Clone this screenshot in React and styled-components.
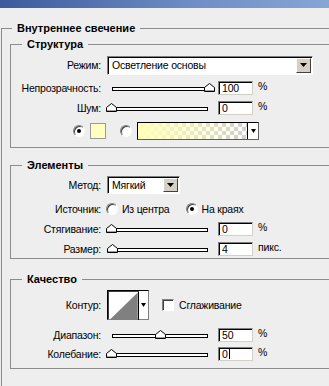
import React from 'react';
import styled, { createGlobalStyle } from 'styled-components';

const GlobalStyle = createGlobalStyle`
  html, body {
    margin: 0;
    padding: 0;
    height: 100%;
    overflow: hidden;
    background: #eeeeee;
  }
  body {
    font-family: "Liberation Sans", Arial, sans-serif;
    font-size: 10.5px;
    letter-spacing: -0.2px;
    color: #000;
  }
  #root { height: 100%; }
`;

const TitleBar = styled.div`
  height: 8px;
  background: linear-gradient(to right, #3b5a9c, #6f8fc6 60%, #86a6d6);
`;

const Outer = styled.fieldset`
  box-sizing: border-box;
  height: 364px;
  margin: 14px 0 0 1px;
  padding: 4px 0 0 8px;
  border: 1px solid #8c8c8c;
  border-right: none;
  border-bottom: none;
  min-width: 0;
`;

const Group = styled.fieldset`
  margin: ${p => p.$mt || 0}px 0 0 0;
  padding: 5px 0 ${p => p.$pb}px 0;
  border: 1px solid #8c8c8c;
  border-right: none;
  min-width: 0;
`;

const Legend = styled.legend`
  margin-left: ${p => p.$ml}px;
  padding: 0 5px;
  font-weight: bold;
  font-size: 11px;
  letter-spacing: 0;
  line-height: 12px;
`;

const Row = styled.div`
  display: flex;
  align-items: center;
  height: ${p => p.$h}px;
  margin-top: ${p => p.$mt || 0}px;
  padding-left: ${p => p.$pl || 0}px;
`;

const Label = styled.div`
  width: 92px;
  padding-right: 2px;
  margin-right: 4px;
  box-sizing: border-box;
  text-align: right;
  white-space: nowrap;
  flex-shrink: 0;
`;

const Select = styled.div`
  width: ${p => p.$w}px;
  height: ${p => p.$h}px;
  box-sizing: border-box;
  display: flex;
  align-items: center;
  justify-content: space-between;
  background: #fff;
  border: 1px solid;
  border-color: #808080 #ffffff #ffffff #808080;
  box-shadow: inset 1px 1px 0 #000;
  padding: 1px 1px 1px 4px;
  flex-shrink: 0;
`;

const DropButton = styled.div`
  width: 15px;
  height: 100%;
  box-sizing: border-box;
  background: #d4d0c8;
  border: 1px solid;
  border-color: #ffffff #404040 #404040 #ffffff;
  display: flex;
  align-items: center;
  justify-content: center;
`;

const Arrow = ({ w = 7 }) => (
  <svg width={w} height="4" viewBox={`0 0 ${w} 4`}>
    <polygon points={`0,0 ${w},0 ${w / 2},4`} fill="#000" />
  </svg>
);

const SliderBox = styled.div`
  position: relative;
  width: 106px;
  height: 14px;
  flex-shrink: 0;
`;

const Track = styled.div`
  position: absolute;
  left: 5px;
  right: 5px;
  top: 6px;
  height: 4px;
  box-sizing: border-box;
  border: 1px solid #000;
  background: #fff;
`;

const Thumb = styled.svg`
  position: absolute;
  top: 2px;
  width: 11px;
  height: 9px;
`;

const Slider = ({ value, max = 100 }) => (
  <SliderBox>
    <Track />
    <Thumb viewBox="0 0 11 9" style={{ left: 4 + (98 * value) / max - 5.5 }}>
      <polygon points="0.5,8.5 0.5,4.5 5.5,0.5 10.5,4.5 10.5,8.5" fill="#fff" stroke="#000" />
      <line x1="1" y1="7.5" x2="10" y2="7.5" stroke="#a0a0a0" />
    </Thumb>
  </SliderBox>
);

const Field = styled.div`
  width: 35px;
  height: 14px;
  margin-left: 5px;
  box-sizing: border-box;
  background: #fff;
  border: 1px solid;
  border-color: #808080 #d4d0c8 #d4d0c8 #808080;
  box-shadow: inset 1px 1px 0 #000;
  padding-left: 3px;
  display: flex;
  align-items: center;
  line-height: 12px;
  flex-shrink: 0;
`;

const Caret = styled.span`
  width: 1px;
  height: 10px;
  margin-left: 1px;
  background: #000;
`;

const Unit = styled.span`
  margin-left: 5px;
  align-self: flex-start;
  line-height: 11px;
  white-space: nowrap;
`;

const Radio = styled.span`
  width: 12px;
  height: 12px;
  box-sizing: border-box;
  border-radius: 50%;
  background: #fff;
  border: 1px solid;
  border-color: #808080 #ffffff #ffffff #808080;
  box-shadow: inset 1px 1px 0 #404040;
  display: inline-flex;
  align-items: center;
  justify-content: center;
  flex-shrink: 0;
  margin-left: ${p => p.$ml || 0}px;
  &::after {
    content: '';
    display: ${p => (p.$on ? 'block' : 'none')};
    width: 4px;
    height: 4px;
    border-radius: 50%;
    background: #000;
  }
`;

const OptionText = styled.span`
  margin-left: 4px;
  margin-right: ${p => p.$mr || 0}px;
  white-space: nowrap;
`;

const Swatch = styled.div`
  width: 16px;
  height: 16px;
  box-sizing: border-box;
  margin-left: 5px;
  margin-right: 14px;
  background: #ffffbf;
  border: 1px solid #9a9a9a;
`;

const GradientPicker = styled.div`
  width: 122px;
  height: 18px;
  margin-left: 5px;
  box-sizing: border-box;
  display: flex;
  border: 1px solid #000;
  border-right-color: #606060;
  border-bottom-color: #606060;
`;

const GradientFill = styled.div`
  flex: 1;
  border-right: 1px solid #000;
  background:
    linear-gradient(to right, #ffffbb, rgba(255, 255, 187, 0.6) 45%, rgba(255, 255, 187, 0)),
    repeating-conic-gradient(#cfcfcf 0 25%, #ffffff 0 50%) 0 0 / 8px 8px;
`;

const ArrowPart = styled.div`
  width: 10px;
  background: #fff;
  display: flex;
  align-items: center;
  justify-content: center;
`;

const Checkbox = styled.span`
  width: 12px;
  height: 12px;
  box-sizing: border-box;
  margin-left: 13px;
  margin-right: 5px;
  background: #fff;
  border: 1px solid;
  border-color: #808080 #ffffff #ffffff #808080;
  box-shadow: inset 1px 1px 0 #404040;
  flex-shrink: 0;
`;

const ContourPicker = styled.div`
  width: 42px;
  height: 30px;
  box-sizing: border-box;
  display: flex;
  background: #fff;
  border: 1px solid;
  border-color: #000 #808080 #808080 #000;
  box-shadow: inset 1px 1px 0 #404040;
  flex-shrink: 0;
`;

const ContourGraph = styled.svg`
  width: 31px;
  height: 28px;
  margin: 1px 0 0 1px;
  border-right: 1px solid #000;
`;

const App = () => (
  <>
    <GlobalStyle />
    <TitleBar />
    <Outer>
      <Legend $ml={2}>Внутреннее свечение</Legend>

      <Group $pb={7}>
        <Legend $ml={11}>Структура</Legend>
        <Row $h={20}>
          <Label>Режим:</Label>
          <Select $w={206} $h={19}>
            <span>Осветление основы</span>
            <DropButton><Arrow /></DropButton>
          </Select>
        </Row>
        <Row $h={14} $mt={6}>
          <Label>Непрозрачность:</Label>
          <Slider value={100} />
          <Field>100</Field>
          <Unit>%</Unit>
        </Row>
        <Row $h={14} $mt={6}>
          <Label>Шум:</Label>
          <Slider value={0} />
          <Field>0</Field>
          <Unit>%</Unit>
        </Row>
        <Row $h={18} $mt={7} $pl={62}>
          <Radio $on />
          <Swatch />
          <Radio />
          <GradientPicker>
            <GradientFill />
            <ArrowPart><Arrow w={5} /></ArrowPart>
          </GradientPicker>
        </Row>
      </Group>

      <Group $mt={11} $pb={2}>
        <Legend $ml={11}>Элементы</Legend>
        <Row $h={18}>
          <Label>Метод:</Label>
          <Select $w={73} $h={18}>
            <span>Мягкий</span>
            <DropButton><Arrow /></DropButton>
          </Select>
        </Row>
        <Row $h={14} $mt={8}>
          <Label>Источник:</Label>
          <Radio $ml={-1} />
          <OptionText $mr={16}>Из центра</OptionText>
          <Radio $on />
          <OptionText>На краях</OptionText>
        </Row>
        <Row $h={14} $mt={6}>
          <Label>Стягивание:</Label>
          <Slider value={0} />
          <Field>0</Field>
          <Unit>%</Unit>
        </Row>
        <Row $h={14} $mt={6}>
          <Label>Размер:</Label>
          <Slider value={4} max={250} />
          <Field>4</Field>
          <Unit>пикс.</Unit>
        </Row>
      </Group>

      <Group $mt={14} $pb={7}>
        <Legend $ml={11}>Качество</Legend>
        <Row $h={30}>
          <Label>Контур:</Label>
          <ContourPicker>
            <ContourGraph viewBox="0 0 30 28">
              <polygon points="1,28 30,0 30,28" fill="#808080" />
            </ContourGraph>
            <ArrowPart><Arrow w={5} /></ArrowPart>
          </ContourPicker>
          <Checkbox />
          <span>Сглаживание</span>
        </Row>
        <Row $h={14} $mt={8}>
          <Label>Диапазон:</Label>
          <Slider value={50} />
          <Field>50</Field>
          <Unit>%</Unit>
        </Row>
        <Row $h={14} $mt={5}>
          <Label>Колебание:</Label>
          <Slider value={0} />
          <Field>0<Caret /></Field>
          <Unit>%</Unit>
        </Row>
      </Group>
    </Outer>
  </>
);

export default App;
